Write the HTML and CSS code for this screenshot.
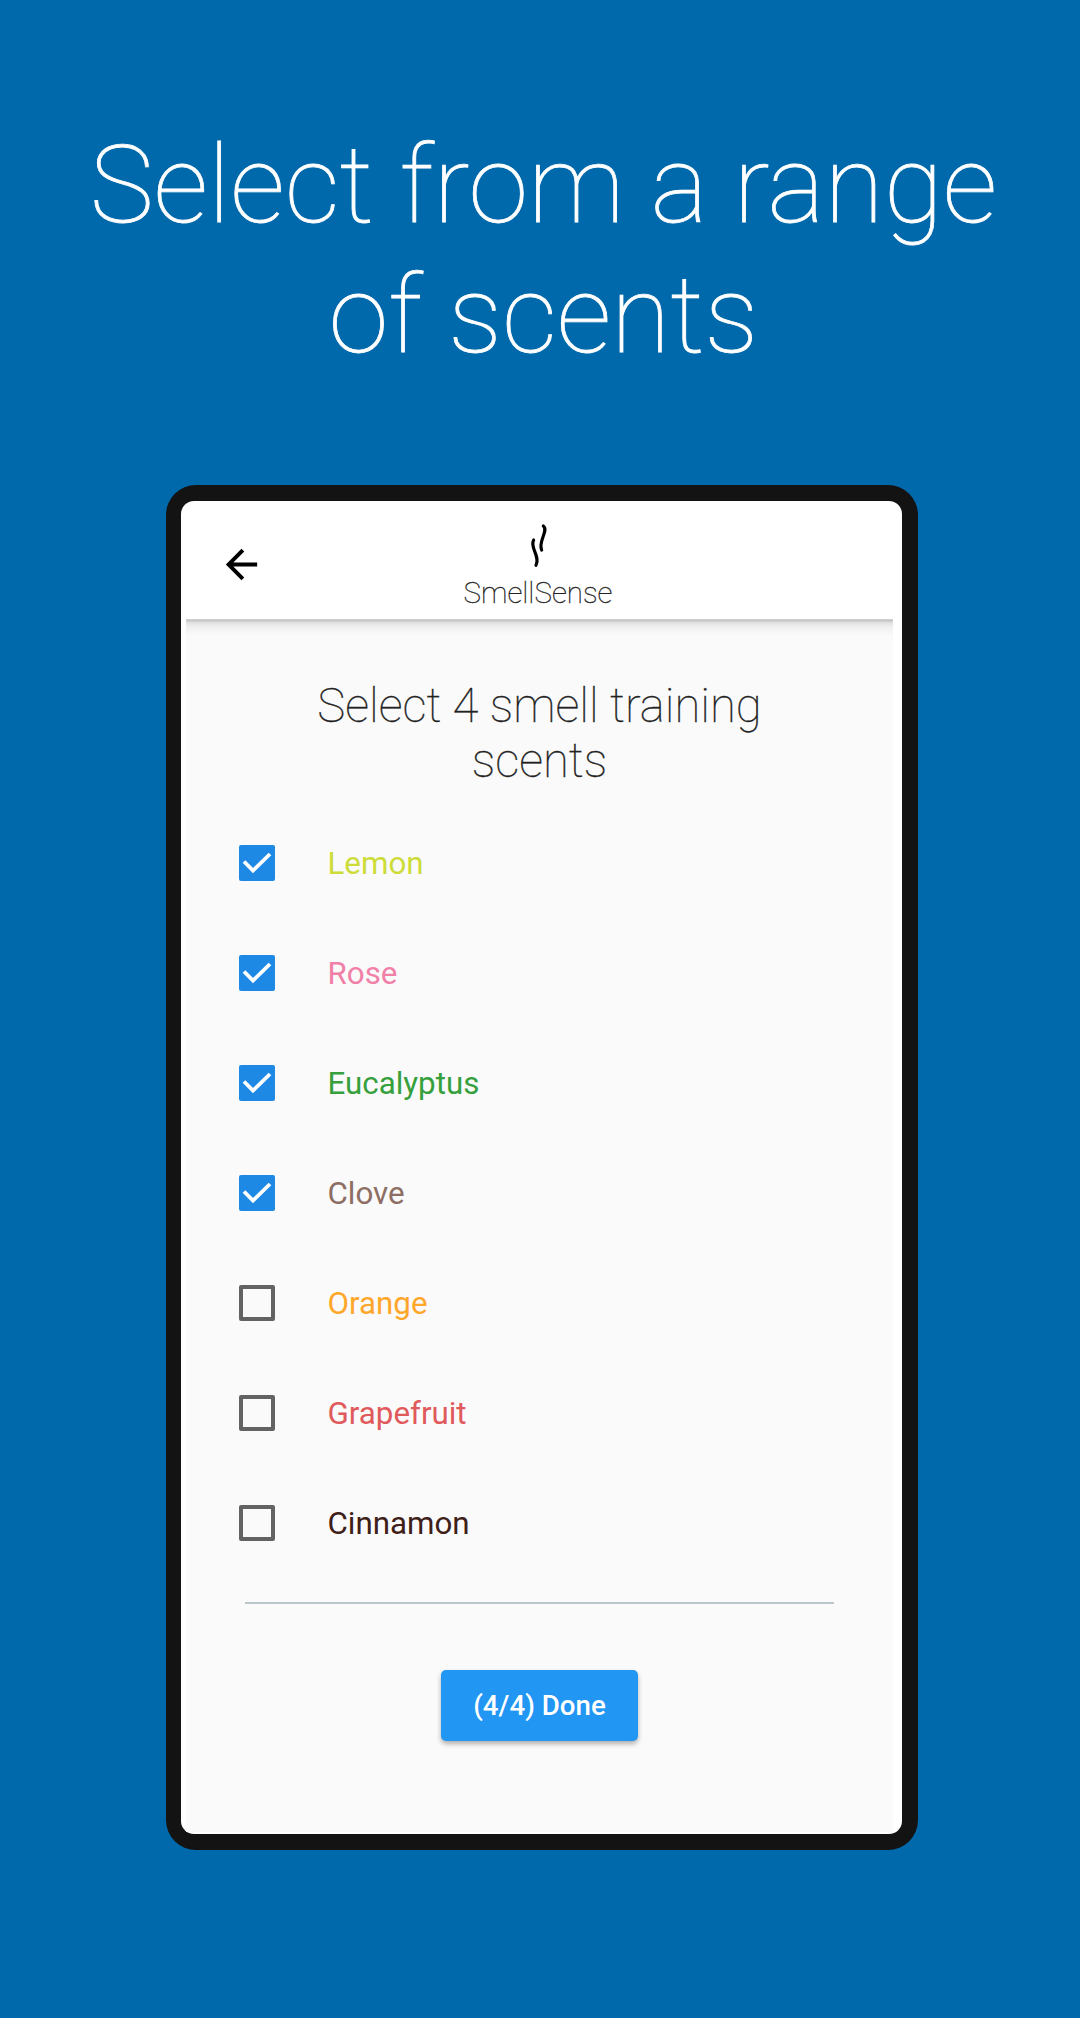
FILE: index.html
```html
<!DOCTYPE html>
<html lang="en">
<head>
<meta charset="utf-8">
<title>SmellSense</title>
<link rel="stylesheet" href="styles.css">
</head>
<body>
<h1 class="headline">Select from a range<br>of scents</h1>
<main class="device">
  <div class="screen">
    <header class="bar">
      <svg class="back" viewBox="0 0 24 24"><path d="M20 11H7.83l5.59-5.59L12 4l-8 8 8 8 1.410-1.410L7.830 13H20v-2z"/></svg>
      <div class="brand">
        <svg class="logo" viewBox="260 70 72 135"><path d="M309 79C326 92 292 127 304 151M280 121C267 143 301 170 287 197"/></svg>
        <span class="name">SmellSense</span>
      </div>
    </header>
    <section class="content">
      <h2 class="title">Select 4 smell training<br>scents</h2>
      <ul class="list">
        <li class="row lemon"><span class="box checked"><svg class="tick" viewBox="0 0 36 36"><path d="M5 16.500L14 25.500 31 9"/></svg></span>Lemon</li>
        <li class="row rose"><span class="box checked"><svg class="tick" viewBox="0 0 36 36"><path d="M5 16.500L14 25.500 31 9"/></svg></span>Rose</li>
        <li class="row eucalyptus"><span class="box checked"><svg class="tick" viewBox="0 0 36 36"><path d="M5 16.500L14 25.500 31 9"/></svg></span>Eucalyptus</li>
        <li class="row clove"><span class="box checked"><svg class="tick" viewBox="0 0 36 36"><path d="M5 16.500L14 25.500 31 9"/></svg></span>Clove</li>
        <li class="row orange"><span class="box"></span>Orange</li>
        <li class="row grapefruit"><span class="box"></span>Grapefruit</li>
        <li class="row cinnamon"><span class="box"></span>Cinnamon</li>
      </ul>
      <hr class="divider">
      <button class="done" type="button">(4/4) Done</button>
    </section>
  </div>
</main>
</body>
</html>
```
FILE: styles.css
```css
* { box-sizing: border-box; }

body {
  margin: 0;
  height: 2018px;
  background: #0069ab;
  font-family: Roboto, sans-serif;
}

.headline {
  margin: 0;
  padding: 120px 0 0 7px;
  text-align: center;
  color: #fff;
  font-weight: 100;
  font-size: 108px;
  line-height: 130px;
  -webkit-text-stroke: .8px #fff;
}

.device {
  width: 752px;
  height: 1365px;
  margin: 105px 0 0 166px;
  padding: 16px 16px 16px 15px;
  border-radius: 30px;
  background: #131313;
}

.screen {
  height: 100%;
  padding: 0 9px 2px 5px;
  border-radius: 13px;
  background: #fff;
  overflow: hidden;
}

.bar {
  display: grid;
  grid-template-columns: 110px 1fr 110px;
  align-items: start;
  height: 118px;
}

.back {
  width: 47px;
  margin: 40px 0 0 32px;
}

.brand {
  display: flex;
  flex-direction: column;
  align-items: center;
  padding: 22px 2px 0 0;
}

.logo {
  width: 24px;
  height: 45px;
  fill: none;
  stroke: #000;
  stroke-width: 9.5;
  stroke-linecap: round;
}

.name {
  margin: 7px 1px 0 0;
  font-size: 29.5px;
  line-height: 36px;
  font-weight: 100;
  color: #222;
  -webkit-text-stroke: .3px #222;
}

.content {
  display: flex;
  flex-direction: column;
  align-items: center;
  height: 1213px;
  padding-top: 60px;
  background: #fafafa linear-gradient(#d5d5d5, #c2c2c2 2px, #dedede 3px, #f0f0f0 8px, #fafafa 16px);
}

.title {
  margin: 0;
  font-weight: 100;
  font-size: 47.2px;
  line-height: 55px;
  text-align: center;
  color: #222;
  -webkit-text-stroke: .3px #222;
}

.list {
  align-self: stretch;
  margin: 19px 0 0;
  padding: 0 0 0 53px;
  list-style: none;
}

.row {
  display: flex;
  align-items: center;
  gap: 52.5px;
  height: 110px;
  font-size: 31.3px;
}

.box {
  width: 36px;
  height: 36px;
  border: 4px solid #636363;
  border-radius: 2px;
}

.checked {
  border: 0;
  background: #1e88e5;
}

.tick {
  display: block;
  fill: none;
  stroke: #fff;
  stroke-width: 3.8;
}

.lemon { color: #cddc39; }
.rose { color: #f180a8; }
.eucalyptus { color: #35a03c; }
.clove { color: #8d6e63; }
.orange { color: #ffa72b; }
.grapefruit { color: #e05a5c; }
.cinnamon { color: #3e2018; }

.divider {
  width: 589px;
  height: 2px;
  margin: 24px 0 66px;
  border: 0;
  background: #bcc7cb;
}

.done {
  width: 197px;
  height: 71px;
  padding: 0;
  border: 0;
  border-radius: 5px;
  background: #2196f3;
  box-shadow: 0 3px 5px rgba(0, 0, 0, .3);
  color: #fff;
  font: 500 27.7px Roboto, sans-serif;
}
```
